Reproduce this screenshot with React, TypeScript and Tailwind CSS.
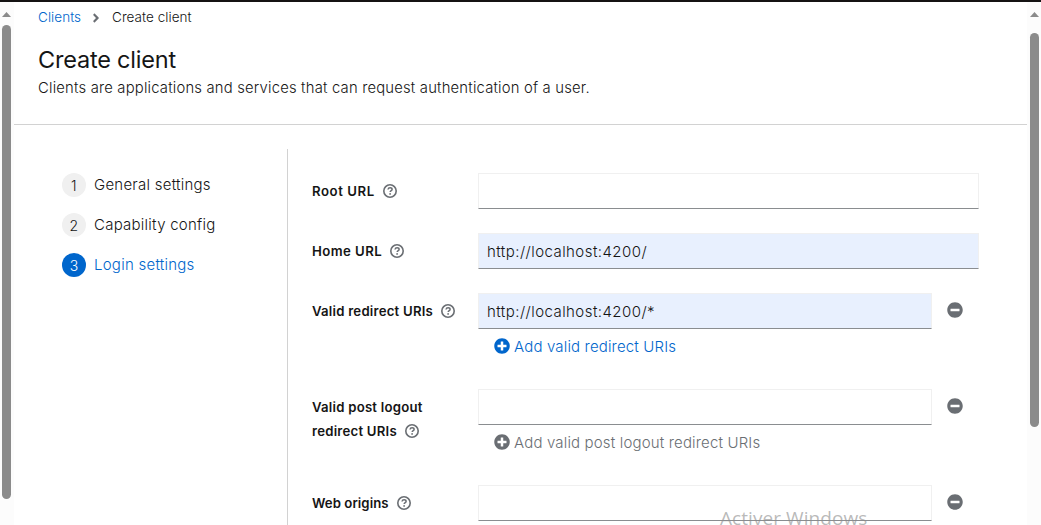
import type { ReactNode } from "react";
import { FaAngleRight, FaMinusCircle, FaPlusCircle } from "react-icons/fa";

function HelpIcon() {
  return (
    <svg viewBox="0 0 14 14" className="h-3.5 w-3.5 shrink-0" fill="none" stroke="#6a6e73">
      <circle cx="7" cy="7" r="6.2" strokeWidth="1.6" />
      <path d="M5 5.5C5.2 4.3 6 3.8 7.1 3.8c1.2 0 2 .7 2 1.6 0 1.2-1.9 1.2-1.9 2.6" strokeWidth="1.5" />
      <circle cx="7.1" cy="9.9" r="0.9" fill="#6a6e73" stroke="none" />
    </svg>
  );
}

function Scrollbar({ inset, thumb }: { inset: string; thumb: string }) {
  return (
    <div className={`flex w-3.5 shrink-0 flex-col bg-[#fcfcfc] pt-[10px] ${inset}`}>
      <svg viewBox="0 0 9 5" className="h-[5px] w-[9px]" fill="#8b8b8b">
        <path d="M4.5 0 9 5H0z" />
      </svg>
      <div className={`w-[9px] rounded-full bg-[#8b8b8b] ${thumb}`} />
    </div>
  );
}

function Step({ n, label, active = false }: { n: number; label: ReactNode; active?: boolean }) {
  return (
    <li className="flex h-6 items-center gap-2">
      <span
        className={`flex h-6 w-6 items-center justify-center rounded-full text-[14px] ${
          active ? "bg-[#0066cc] text-white" : "bg-[#f0f0f0] text-[#151515]"
        }`}
      >
        {n}
      </span>
      <span className={active ? "text-[#0066cc]" : "text-[#151515]"}>{label}</span>
    </li>
  );
}

function Field({ value = "", wide = false }: { value?: string; wide?: boolean }) {
  return (
    <div
      className={`flex h-9 items-center border border-[#f0f0f0] border-b-[#8a8d90] pt-0.5 pl-2 text-[15px] tracking-[0.44px] ${
        wide ? "w-[501px]" : "w-[454px]"
      } ${value ? "bg-[#e8f0fe]" : "bg-white"}`}
    >
      {value}
    </div>
  );
}

function Label({ children, tracking = "tracking-[0.22px]" }: { children: ReactNode; tracking?: string }) {
  return (
    <div className={`w-[166px] shrink-0 pt-1.5 text-[13.2px] leading-6 font-semibold whitespace-nowrap ${tracking}`}>
      {children}
    </div>
  );
}

function Help({ text }: { text: string }) {
  return (
    <span className="flex items-center gap-2">
      {text}
      <HelpIcon />
    </span>
  );
}

function ListField({ value, add, disabled = false }: { value?: string; add?: string; disabled?: boolean }) {
  return (
    <div>
      <div className="flex">
        <Field value={value} />
        <FaMinusCircle className="mt-[9px] ml-[15px] h-4 w-4 text-[#6a6e73]" />
      </div>
      {add && (
        <div
          className={`mt-[5px] ml-4 flex h-6 items-center gap-1 text-[15px] tracking-[0.16px] ${
            disabled ? "text-[#6a6e73]" : "text-[#0066cc]"
          }`}
        >
          <FaPlusCircle className="h-4 w-4" />
          <span className="pt-0.5">{add}</span>
        </div>
      )}
    </div>
  );
}

export default function App() {
  return (
    <div className="relative flex h-[525px] w-[1041px] flex-col overflow-hidden border-t-2 border-[#151313] bg-white font-['Inter','Liberation_Sans',sans-serif] font-light text-[#151515]">
      <div className="flex min-h-0 flex-1">
        <Scrollbar inset="pl-0.5" thumb="mt-2 h-[474px]" />
        <main className="min-w-0 flex-1">
          <header className="h-[123px] border-b border-[#d2d2d2] pl-6">
            <nav className="flex h-[30px] items-center pt-px text-[13.5px] tracking-[0.05px]">
              <span className="w-[51px] text-[#0066cc]">Clients</span>
              <FaAngleRight className="mr-[9px] h-3.5 w-3.5 text-[#6a6e73]" />
              <span>Create client</span>
            </nav>
            <h1 className="mt-3 text-[23.5px] leading-8 font-normal tracking-[-0.2px]">Create client</h1>
            <p className="text-[14.8px] leading-6 tracking-[0.2px]">
              Clients are applications and services that can request authentication of a user.
            </p>
          </header>
          <div className="flex pt-6">
            <ol className="flex h-[400px] w-[274px] shrink-0 flex-col gap-4 border-r border-[#d2d2d2] pt-6 pl-12 text-[15px] tracking-[0.25px]">
              <Step n={1} label="General settings" />
              <Step n={2} label="Capability config" />
              <Step n={3} label="Login settings" active />
            </ol>
            <form className="pt-6 pl-6">
              <div className="flex h-[60px]">
                <Label tracking="tracking-[0.55px]"><Help text="Root URL" /></Label>
                <Field wide />
              </div>
              <div className="flex h-[60px]">
                <Label tracking="tracking-[0.45px]"><Help text="Home URL" /></Label>
                <Field wide value="http://localhost:4200/" />
              </div>
              <div className="flex h-24">
                <Label><Help text="Valid redirect URIs" /></Label>
                <ListField value="http://localhost:4200/*" add="Add valid redirect URIs" />
              </div>
              <div className="flex h-24">
                <Label>
                  Valid post logout
                  <Help text="redirect URIs" />
                </Label>
                <ListField add="Add valid post logout redirect URIs" disabled />
              </div>
              <div className="flex">
                <Label tracking="tracking-[0.05px]"><Help text="Web origins" /></Label>
                <ListField />
              </div>
            </form>
          </div>
        </main>
        <Scrollbar inset="pl-[3px]" thumb="mt-4 h-[394px]" />
      </div>
      <div className="absolute top-[507px] left-[720px] font-['Open_Sans',sans-serif] text-[19px] leading-[18px] font-normal tracking-[0.07px] whitespace-nowrap text-[#8b8b8b]/60">
        Activer Windows
      </div>
    </div>
  );
}
